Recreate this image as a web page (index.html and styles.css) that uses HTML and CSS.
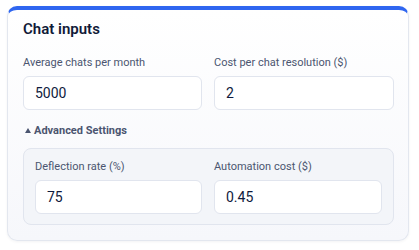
FILE: index.html
```html
<!DOCTYPE html>
<html>
<head>
<meta charset="utf-8">
<link rel="stylesheet" href="styles.css">
</head>
<body>
<div class="card">
  <h2 class="title">Chat inputs</h2>
  <div class="grid">
    <label class="field">
      <span class="label">Average chats per month</span>
      <input class="input" type="text" value="5000">
    </label>
    <label class="field">
      <span class="label">Cost per chat resolution ($)</span>
      <input class="input" type="text" value="2">
    </label>
  </div>
  <div class="adv-toggle"><span class="caret"></span>Advanced Settings</div>
  <div class="adv-box">
    <div class="grid inner">
      <label class="field">
        <span class="label">Deflection rate (%)</span>
        <input class="input" type="text" value="75">
      </label>
      <label class="field">
        <span class="label">Automation cost ($)</span>
        <input class="input" type="text" value="0.45">
      </label>
    </div>
  </div>
</div>
</body>
</html>
```
FILE: styles.css
```css
html, body {
  margin: 0;
  background: #ffffff;
}
body {
  padding: 6px 10px 8px 7px;
  font-family: Roboto, "Liberation Sans", sans-serif;
}
.card {
  width: 402px;
  box-sizing: border-box;
  border: 1px solid #e3e7ef;
  border-top: 4px solid #2f66f0;
  border-radius: 10px;
  background: linear-gradient(#ffffff, #f6f7fb);
  padding: 9px 14px 15px 15px;
  box-shadow: 0 1px 3px rgba(15, 23, 42, 0.05);
}
.title {
  margin: 0 0 17px 0;
  font-size: 15px;
  font-weight: 600;
  color: #101a38;
  line-height: 20px;
}
.grid {
  display: grid;
  grid-template-columns: 179fr 180fr;
  gap: 12px;
}
.grid.inner {
  grid-template-columns: 167fr 168fr;
}
.field {
  display: flex;
  flex-direction: column;
  gap: 6px;
}
.label {
  font-size: 11px;
  line-height: 14px;
  color: #4b5570;
}
.input {
  height: 34px;
  box-sizing: border-box;
  border: 1px solid #e1e5ee;
  border-radius: 6px;
  background: #fff;
  padding: 0 11px;
  font-family: Roboto, "Liberation Sans", sans-serif;
  font-size: 14px;
  color: #0f1b3d;
  outline: none;
  width: 100%;
}
.adv-toggle {
  display: flex;
  align-items: center;
  margin: 14px 0 10px 2px;
  font-size: 11px;
  font-weight: 700;
  line-height: 14px;
  color: #4b5570;
}
.caret {
  width: 0;
  height: 0;
  border-left: 3px solid transparent;
  border-right: 3px solid transparent;
  border-bottom: 5px solid #4b5570;
  margin: 0 3px 1px 0;
}
.adv-box {
  border: 1px solid #e1e5ee;
  border-radius: 8px;
  background: #f3f5f9;
  padding: 11px 11px 10px 11px;
}
```
